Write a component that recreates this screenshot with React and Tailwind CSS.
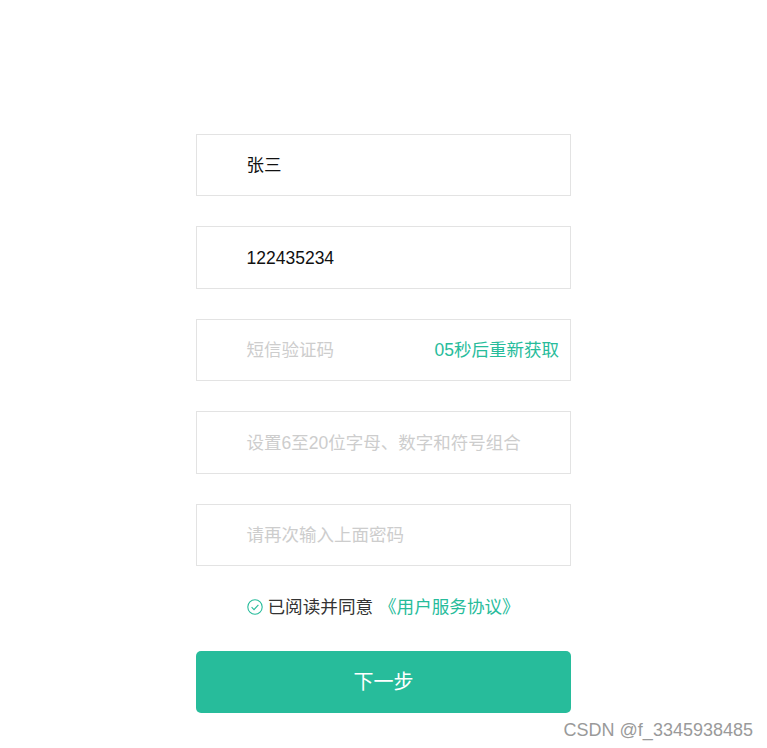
const fields = [
  { value: "张三" },
  { value: "122435234" },
  { placeholder: "短信验证码", action: "05秒后重新获取" },
  { placeholder: "设置6至20位字母、数字和符号组合" },
  { placeholder: "请再次输入上面密码" },
];

function CheckIcon() {
  return (
    <svg viewBox="0 0 16 16" className="h-4 w-4 shrink-0" fill="none" stroke="#27bc9b" strokeWidth="1.1">
      <circle cx="8" cy="8" r="7.2" />
      <path d="M4.6 8.2l2.4 2.4 4.4-4.8" />
    </svg>
  );
}

export default function App() {
  return (
    <div className="relative h-[748px] w-full overflow-hidden bg-white font-['Liberation_Sans','Noto_Sans_CJK_SC',sans-serif]">
      <div className="ml-[196px] w-[375px] pt-[133.75px]">
        <div className="space-y-[30px]">
          {fields.map((field, i) => (
            <div key={i} className="flex h-[62.5px] items-center justify-between border border-[#e3e3e3] pl-[49.5px] pr-[11px] pt-[1px] text-[17.5px]">
              <span className={field.value ? "text-[#111]" : "text-[#cdcdcd]"}>{field.value || field.placeholder}</span>
              {field.action && <span className="text-[#27bc9b]">{field.action}</span>}
            </div>
          ))}
        </div>
        <div className="mt-[28.75px] flex items-center gap-[5px] pl-[50.5px] text-[17.6px] leading-[24px] text-[#333]">
          <CheckIcon />
          <span>已阅读并同意 <span className="ml-[1px] text-[#27bc9b]">《用户服务协议》</span></span>
        </div>
        <button className="mt-[32px] h-[62px] w-full rounded-[5px] bg-[#27bc9b] text-xl text-white">下一步</button>
      </div>
      <span className="absolute bottom-[8px] right-[14px] text-lg leading-[20px] text-[#9a9a9a]">CSDN @f_3345938485</span>
    </div>
  );
}
